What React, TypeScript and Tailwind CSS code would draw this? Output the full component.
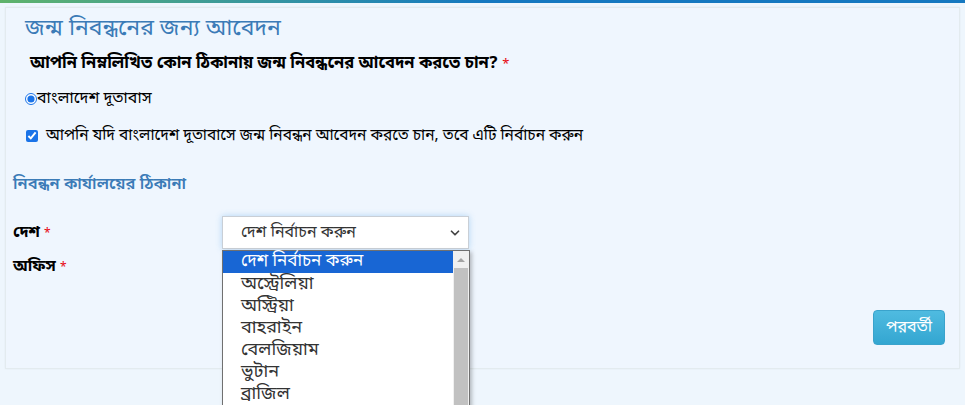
import { ChevronDown } from 'lucide-react'

const countries = ['দেশ নির্বাচন করুন', 'অস্ট্রেলিয়া', 'অস্ট্রিয়া', 'বাহরাইন', 'বেলজিয়াম', 'ভুটান', 'ব্রাজিল']

export default function App() {
  return (
    <div
      className="relative w-[965px] h-[405px] overflow-hidden bg-[#eef6fd] text-[#222]"
      style={{ fontFamily: '"Noto Sans Bengali", "Noto Sans", "DejaVu Sans", sans-serif' }}
    >
      {/* top bar */}
      <div className="h-[3px] bg-gradient-to-r from-[#5fb36a] via-[#1578c0] to-[#1578c0]" />

      <div className="px-[5px] pt-[4px]">
        <div className="relative h-[362px] border border-[#e3ebef] bg-[#eff6fe] shadow-[0_0_2px_rgba(0,0,0,0.05)]">
          <div className="pl-[19px] pt-[6px]">
            <h1 className="text-[23px] leading-[30px] text-[#3b7bb7]">জন্ম নিবন্ধনের জন্য আবেদন</h1>
            <p className="mt-[9px] pl-[5px] text-[16.5px] leading-[22px] font-bold text-black">
              আপনি নিম্নলিখিত কোন ঠিকানায় জন্ম নিবন্ধনের আবেদন করতে চান? <span className="text-red-600 font-normal text-[13px]">*</span>
            </p>
            <label className="mt-[12px] flex items-center text-[16px] leading-[22px] text-black">
              <input type="radio" defaultChecked className="m-0 h-[12px] w-[12px] accent-[#1a73e8]" />
              বাংলাদেশ দূতাবাস
            </label>
            <label className="mt-[15px] flex items-center gap-[8px] text-[15.5px] leading-[22px] text-black">
              <input type="checkbox" defaultChecked className="m-0 ml-[1px] h-[12px] w-[12px] accent-[#1a73e8]" />
              আপনি যদি বাংলাদেশ দূতাবাসে জন্ম নিবন্ধন আবেদন করতে চান, তবে এটি নির্বাচন করুন
            </label>
          </div>

          <div className="pl-[7px] pt-[27px]">
            <h2 className="text-[16.5px] leading-[22px] font-semibold text-[#3b7bb7]">নিবন্ধন কার্যালয়ের ঠিকানা</h2>
            <div className="mt-[20px] flex items-center">
              <span className="w-[209px] text-[16px] font-bold text-black">
                দেশ <span className="text-red-600 font-normal text-[12px]">*</span>
              </span>
              <div className="flex h-[33px] w-[247px] items-center justify-between border border-[#c9cfd6] bg-white pl-[18px] pr-[6px] text-[16px] text-[#333] shadow-[0_0_6px_rgba(102,175,233,0.45)]">
                দেশ নির্বাচন করুন
                <ChevronDown size={14} strokeWidth={3} className="text-[#444]" />
              </div>
            </div>
            <div className="mt-[6px] text-[16px] font-bold text-black">
              অফিস <span className="text-red-600 font-normal text-[12px]">*</span>
            </div>
          </div>

          <div className="absolute right-[14px] top-[302px]">
            <button className="h-[35px] w-[72px] rounded-[4px] border border-[#3aa3cc] bg-gradient-to-b from-[#4fbbe0] to-[#33a6d1] text-[16px] text-white">
              পরবর্তী
            </button>
          </div>
        </div>
      </div>

      {/* open dropdown list */}
      <div className="absolute left-[222px] top-[250px] flex h-[160px] w-[248px] border border-[#707070] border-b-0 bg-white shadow-[2px_2px_4px_rgba(0,0,0,0.25)]">
        <ul className="flex-1">
          {countries.map((c, i) => (
            <li
              key={c}
              className={
                i === 0
                  ? 'h-[22px] pl-[18px] text-[17px] leading-[22px] bg-[#1866d4] text-white'
                  : 'h-[22px] pl-[18px] text-[18px] leading-[22px] text-[#333]'
              }
            >
              {c}
            </li>
          ))}
        </ul>
        <div className="flex w-[16px] flex-col bg-[#f0f0f0]">
          <div className="flex h-[17px] items-center justify-center">
            <div className="h-0 w-0 border-x-[4px] border-b-[4px] border-x-transparent border-b-[#a3a3a3]" />
          </div>
          <div className="mx-[1px] flex-1 bg-[#c1c1c1]" />
        </div>
      </div>
    </div>
  )
}
